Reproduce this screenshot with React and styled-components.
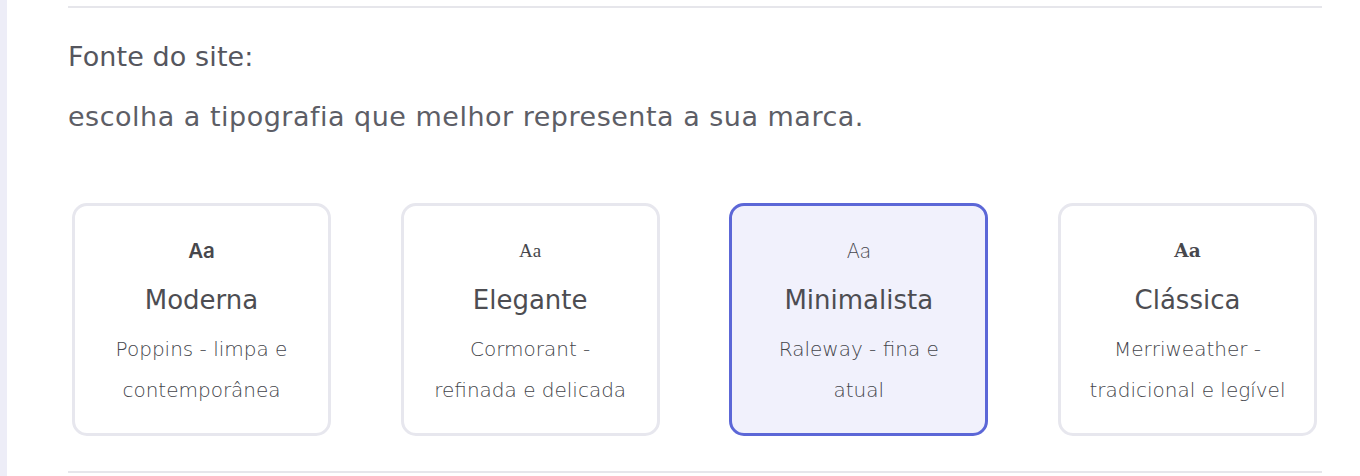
import React from "react";
import styled, { createGlobalStyle } from "styled-components";

const GlobalStyle = createGlobalStyle`
  html, body { margin: 0; padding: 0; background: #ffffff; }
  body { font-family: "DejaVu Sans", "Inter", sans-serif; color: #55565e; }
  * { box-sizing: border-box; }
`;

const Page = styled.div`
  display: flex;
  min-height: 476px;
`;

const SideStrip = styled.div`
  width: 7px;
  flex: 0 0 7px;
  background: #ededf7;
`;

const Main = styled.main`
  flex: 1;
  padding: 6px 38px 0 61px;
`;

const Section = styled.section`
  border-top: 2px solid #e6e6eb;
  border-bottom: 2px solid #e6e6eb;
`;

const Title = styled.h2`
  margin: 33px 0 0;
  font-size: 27px;
  line-height: 32px;
  letter-spacing: 0.1px;
  font-weight: 400;
  color: #55565e;
`;

const Subtitle = styled.p`
  margin: 28px 0 0;
  font-size: 27px;
  line-height: 32px;
  letter-spacing: 0.5px;
  font-weight: 400;
  color: #5d5e66;
`;

const Grid = styled.div`
  display: grid;
  grid-template-columns: repeat(4, 259px);
  justify-content: space-between;
  padding: 0 5px 0 4px;
  margin: 70px 0 35px;
`;

const Card = styled.button`
  display: flex;
  flex-direction: column;
  align-items: center;
  height: 233px;
  padding: 31px 10px 0;
  border: 3px solid ${(p) => (p.$active ? "#5c67d7" : "#e7e7ee")};
  border-radius: 15px;
  background: ${(p) => (p.$active ? "#f1f1fc" : "#ffffff")};
  font-family: inherit;
  cursor: pointer;
  text-align: center;
`;

const Sample = styled.span`
  display: block;
  height: 28px;
  line-height: 28px;
  font-family: ${(p) => p.$family};
  font-size: ${(p) => p.$size}px;
  font-weight: ${(p) => p.$weight};
  color: #47474c;
`;

const CardTitle = styled.span`
  display: block;
  margin-top: 18px;
  font-size: 26px;
  line-height: 34px;
  font-weight: 400;
  color: #4d4d52;
`;

const CardDesc = styled.span`
  display: block;
  margin-top: 12px;
  font-size: 20px;
  line-height: 41px;
  font-weight: 300;
  color: #44454b;
`;

const fonts = [
  {
    name: "Moderna",
    l1: "Poppins - limpa e",
    l2: "contemporânea",
    family: '"Inter", sans-serif',
    size: 20.5,
    weight: 600,
  },
  {
    name: "Elegante",
    l1: "Cormorant -",
    l2: "refinada e delicada",
    family: '"Liberation Serif", serif',
    size: 19,
    weight: 400,
  },
  {
    name: "Minimalista",
    l1: "Raleway - fina e",
    l2: "atual",
    family: '"Inter", sans-serif',
    size: 20,
    weight: 200,
    active: true,
  },
  {
    name: "Clássica",
    l1: "Merriweather -",
    l2: "tradicional e legível",
    family: '"DejaVu Serif", serif',
    size: 18.5,
    weight: 700,
  },
];

export default function App() {
  return (
    <>
      <GlobalStyle />
      <Page>
        <SideStrip />
        <Main>
          <Section>
            <Title>Fonte do site:</Title>
            <Subtitle>escolha a tipografia que melhor representa a sua marca.</Subtitle>
            <Grid>
              {fonts.map((f) => (
                <Card key={f.name} $active={f.active}>
                  <Sample $family={f.family} $size={f.size} $weight={f.weight}>
                    Aa
                  </Sample>
                  <CardTitle>{f.name}</CardTitle>
                  <CardDesc>
                    {f.l1}
                    <br />
                    {f.l2}
                  </CardDesc>
                </Card>
              ))}
            </Grid>
          </Section>
        </Main>
      </Page>
    </>
  );
}
